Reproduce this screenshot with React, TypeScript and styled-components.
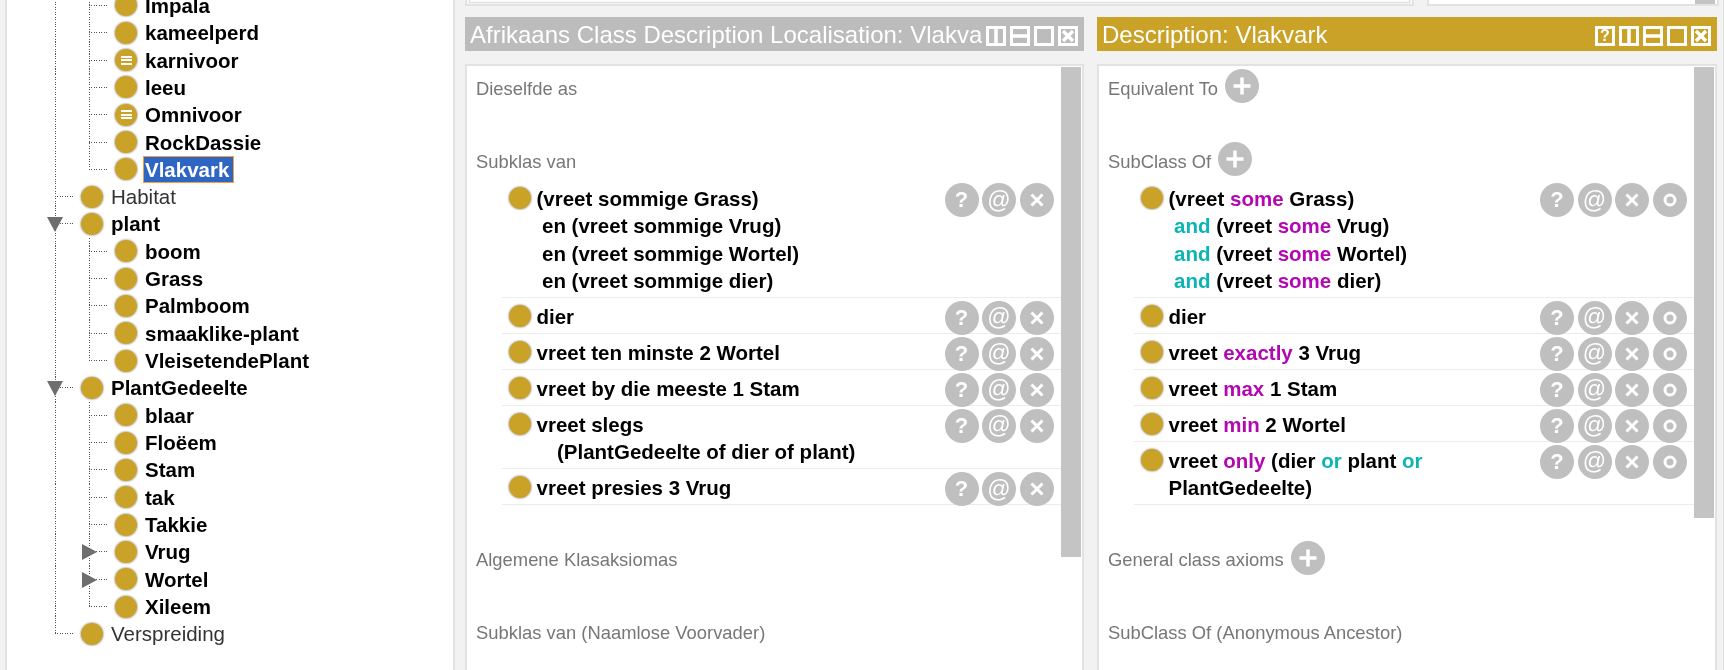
import React from "react";
import styled, { createGlobalStyle } from "styled-components";

const GOLD = "#c9a227";
const BUTTON_GREY = "#bfbfbf";

type TreeItem = {
  label: string;
  level: 1 | 2;
  strong?: boolean;
  defined?: boolean;
  selected?: boolean;
  open?: boolean;
  closed?: boolean;
  lastInGroup?: boolean;
  lastRoot?: boolean;
};

const treeItems: TreeItem[] = [
  { label: "Impala", level: 2, strong: true },
  { label: "kameelperd", level: 2, strong: true },
  { label: "karnivoor", level: 2, strong: true, defined: true },
  { label: "leeu", level: 2, strong: true },
  { label: "Omnivoor", level: 2, strong: true, defined: true },
  { label: "RockDassie", level: 2, strong: true },
  { label: "Vlakvark", level: 2, strong: true, selected: true, lastInGroup: true },
  { label: "Habitat", level: 1 },
  { label: "plant", level: 1, strong: true, open: true },
  { label: "boom", level: 2, strong: true },
  { label: "Grass", level: 2, strong: true },
  { label: "Palmboom", level: 2, strong: true },
  { label: "smaaklike-plant", level: 2, strong: true },
  { label: "VleisetendePlant", level: 2, strong: true, lastInGroup: true },
  { label: "PlantGedeelte", level: 1, strong: true, open: true },
  { label: "blaar", level: 2, strong: true },
  { label: "Floëem", level: 2, strong: true },
  { label: "Stam", level: 2, strong: true },
  { label: "tak", level: 2, strong: true },
  { label: "Takkie", level: 2, strong: true },
  { label: "Vrug", level: 2, strong: true, closed: true },
  { label: "Wortel", level: 2, strong: true, closed: true },
  { label: "Xileem", level: 2, strong: true, lastInGroup: true },
  { label: "Verspreiding", level: 1, lastRoot: true },
];

export default function App() {
  return (
    <>
      <GlobalStyle />
      <Screen>
        <TreePanel>
          <TreeList>
            {treeItems.map((item) => (
              <TreeRow key={item.label} item={item} />
            ))}
          </TreeList>
        </TreePanel>

        <Workspace>
          <TopStrip>
            <TopPaneWide>
              <TopPaneInner />
            </TopPaneWide>
            <TopPaneNarrow>
              <TopThumb />
            </TopPaneNarrow>
          </TopStrip>

          <Columns>
            <Column $width={619}>
              <ViewHeader $tone="#bcbcbc">
                <ViewTitle>Afrikaans Class Description Localisation: Vlakvark</ViewTitle>
                <HeaderIcons>
                  <SplitVerticalIcon />
                  <SplitHorizontalIcon />
                  <MaximiseIcon />
                  <CloseIcon />
                </HeaderIcons>
              </ViewHeader>
              <ViewBody>
                <ViewContent>
                  <SectionTitle>
                    <SectionLabel>Dieselfde as</SectionLabel>
                  </SectionTitle>
                  <SectionTitle>
                    <SectionLabel>Subklas van</SectionLabel>
                  </SectionTitle>
                  <AxiomList>
                    <Axiom>
                      <AxiomLine>(vreet sommige Grass)</AxiomLine>
                      <AxiomLine $indent={5.5}>en (vreet sommige Vrug)</AxiomLine>
                      <AxiomLine $indent={5.5}>en (vreet sommige Wortel)</AxiomLine>
                      <AxiomLine $indent={5.5}>en (vreet sommige dier)</AxiomLine>
                    </Axiom>
                    <Axiom>
                      <AxiomLine>dier</AxiomLine>
                    </Axiom>
                    <Axiom>
                      <AxiomLine>vreet ten minste 2 Wortel</AxiomLine>
                    </Axiom>
                    <Axiom>
                      <AxiomLine>vreet by die meeste 1 Stam</AxiomLine>
                    </Axiom>
                    <Axiom>
                      <AxiomLine>vreet slegs</AxiomLine>
                      <AxiomLine $indent={20.5}>(PlantGedeelte of dier of plant)</AxiomLine>
                    </Axiom>
                    <Axiom>
                      <AxiomLine>vreet presies 3 Vrug</AxiomLine>
                    </Axiom>
                  </AxiomList>
                  <SectionTitle>
                    <SectionLabel>Algemene Klasaksiomas</SectionLabel>
                  </SectionTitle>
                  <SectionTitle>
                    <SectionLabel>Subklas van (Naamlose Voorvader)</SectionLabel>
                  </SectionTitle>
                </ViewContent>
                <ScrollThumb $height={490} />
              </ViewBody>
            </Column>

            <Column $width={620}>
              <ViewHeader $tone={GOLD}>
                <ViewTitle>Description: Vlakvark</ViewTitle>
                <HeaderIcons>
                  <HelpIcon />
                  <SplitVerticalIcon />
                  <SplitHorizontalIcon />
                  <MaximiseIcon />
                  <CloseIcon />
                </HeaderIcons>
              </ViewHeader>
              <ViewBody>
                <ViewContent>
                  <SectionTitle>
                    <SectionLabel>Equivalent To</SectionLabel>
                    <AddButton />
                  </SectionTitle>
                  <SectionTitle>
                    <SectionLabel>SubClass Of</SectionLabel>
                    <AddButton />
                  </SectionTitle>
                  <AxiomList>
                    <Axiom $extra>
                      <AxiomLine>
                        (vreet <Keyword>some</Keyword> Grass)
                      </AxiomLine>
                      <AxiomLine $indent={5.5}>
                        <Connective>and</Connective> (vreet <Keyword>some</Keyword> Vrug)
                      </AxiomLine>
                      <AxiomLine $indent={5.5}>
                        <Connective>and</Connective> (vreet <Keyword>some</Keyword> Wortel)
                      </AxiomLine>
                      <AxiomLine $indent={5.5}>
                        <Connective>and</Connective> (vreet <Keyword>some</Keyword> dier)
                      </AxiomLine>
                    </Axiom>
                    <Axiom $extra>
                      <AxiomLine>dier</AxiomLine>
                    </Axiom>
                    <Axiom $extra>
                      <AxiomLine>
                        vreet <Keyword>exactly</Keyword> 3 Vrug
                      </AxiomLine>
                    </Axiom>
                    <Axiom $extra>
                      <AxiomLine>
                        vreet <Keyword>max</Keyword> 1 Stam
                      </AxiomLine>
                    </Axiom>
                    <Axiom $extra>
                      <AxiomLine>
                        vreet <Keyword>min</Keyword> 2 Wortel
                      </AxiomLine>
                    </Axiom>
                    <Axiom $extra>
                      <AxiomLine>
                        vreet <Keyword>only</Keyword> (dier <Connective>or</Connective> plant{" "}
                        <Connective>or</Connective>
                      </AxiomLine>
                      <AxiomLine>PlantGedeelte)</AxiomLine>
                    </Axiom>
                  </AxiomList>
                  <SectionTitle>
                    <SectionLabel>General class axioms</SectionLabel>
                    <AddButton />
                  </SectionTitle>
                  <SectionTitle>
                    <SectionLabel>SubClass Of (Anonymous Ancestor)</SectionLabel>
                  </SectionTitle>
                </ViewContent>
                <ScrollThumb $height={451} />
              </ViewBody>
            </Column>
          </Columns>
        </Workspace>

        <WindowEdge>
          <WindowEdgeMark />
        </WindowEdge>
      </Screen>
    </>
  );
}

function TreeRow({ item }: { item: TreeItem }) {
  const rootTrunk = item.lastRoot ? "half" : "full";

  return (
    <Row>
      {item.level === 1 ? (
        <Guide $width={26} $trunk={rootTrunk} $branch>
          {item.open && <OpenToggle />}
        </Guide>
      ) : (
        <>
          <Guide $width={34} $trunk="full" />
          <Guide $width={26} $trunk={item.lastInGroup ? "half" : "full"} $branch>
            {item.closed && <ClosedToggle />}
          </Guide>
        </>
      )}
      <Bullet>{item.defined && <DefinedMark />}</Bullet>
      <TreeLabel $strong={item.strong} $selected={item.selected}>
        {item.label}
      </TreeLabel>
    </Row>
  );
}

function Axiom({ children, $extra }: { children: React.ReactNode; $extra?: boolean }) {
  return (
    <AxiomRow>
      <AxiomBullet />
      <AxiomText>{children}</AxiomText>
      <AxiomButtons>
        <RoundButton>?</RoundButton>
        <RoundButton $light>@</RoundButton>
        <RoundButton>
          <svg width="18" height="18" viewBox="0 0 18 18">
            <path d="M3.5 3.5l11 11M14.5 3.5l-11 11" stroke="#fff" strokeWidth="3" />
          </svg>
        </RoundButton>
        {$extra && (
          <RoundButton>
            <svg width="18" height="18" viewBox="0 0 18 18">
              <circle cx="9" cy="9" r="5" fill="none" stroke="#fff" strokeWidth="3" />
            </svg>
          </RoundButton>
        )}
      </AxiomButtons>
    </AxiomRow>
  );
}

function AddButton() {
  return (
    <AddCircle>
      <svg width="22" height="22" viewBox="0 0 22 22">
        <path d="M11 2.5v17M2.5 11h17" stroke="#fff" strokeWidth="3.5" />
      </svg>
    </AddCircle>
  );
}

function HeaderIconFrame({ children }: { children?: React.ReactNode }) {
  return (
    <svg width="20" height="20" viewBox="0 0 20 20">
      <rect x="1.5" y="1.5" width="17" height="17" fill="none" stroke="#fff" strokeWidth="3" />
      {children}
    </svg>
  );
}

function HelpIcon() {
  return <HelpBox>?</HelpBox>;
}

function SplitVerticalIcon() {
  return (
    <HeaderIconFrame>
      <path d="M10 1v18" stroke="#fff" strokeWidth="3.5" />
    </HeaderIconFrame>
  );
}

function SplitHorizontalIcon() {
  return (
    <HeaderIconFrame>
      <path d="M1 10h18" stroke="#fff" strokeWidth="3.5" />
    </HeaderIconFrame>
  );
}

function MaximiseIcon() {
  return <HeaderIconFrame />;
}

function CloseIcon() {
  return (
    <HeaderIconFrame>
      <path d="M5 5l10 10M15 5L5 15" stroke="#fff" strokeWidth="3.5" />
    </HeaderIconFrame>
  );
}

const GlobalStyle = createGlobalStyle`
  html, body {
    margin: 0;
    padding: 0;
    background: #f2f2f2;
  }
`;

const Screen = styled("div")`
  width: 1724px;
  height: 670px;
  overflow: hidden;
  display: flex;
  padding-left: 5px;
  box-sizing: border-box;
  background: #f2f2f2;
  color: #000;
  font-family: "Liberation Sans", Arial, sans-serif;
  filter: blur(0.5px);
`;

const TreePanel = styled("div")`
  width: 450px;
  flex-shrink: 0;
  box-sizing: border-box;
  background: #fff;
  border-left: 2px solid #e2e2e2;
  border-right: 2px solid #e2e2e2;
  overflow: hidden;
`;

const TreeList = styled("div")`
  margin-top: -8.3px;
  padding-left: 48px;
`;

const Row = styled("div")`
  height: 27.33px;
  display: flex;
  align-items: center;
`;

type GuideProps = {
  $width: number;
  $trunk: "full" | "half";
  $branch?: boolean;
};
const Guide = styled("span")<GuideProps>`
  position: relative;
  flex-shrink: 0;
  align-self: stretch;
  width: ${({ $width }) => $width}px;
  background-image:
    repeating-linear-gradient(to bottom, #555 0 1px, transparent 1px 2.5px)
    ${({ $branch }) =>
      $branch ? ", repeating-linear-gradient(to right, #555 0 1px, transparent 1px 2.5px)" : ""};
  background-repeat: no-repeat;
  background-size: 1px ${({ $trunk }) => ($trunk === "half" ? "50%" : "100%")}
    ${({ $branch }) => ($branch ? ", 20px 1px" : "")};
  background-position: 0 0 ${({ $branch }) => ($branch ? ", 0 50%" : "")};
`;

const OpenToggle = styled("span")`
  position: absolute;
  left: -8px;
  top: 7px;
  width: 0;
  height: 0;
  border-left: 8.5px solid transparent;
  border-right: 8.5px solid transparent;
  border-top: 15px solid #6e6e6e;
`;

const ClosedToggle = styled("span")`
  position: absolute;
  left: -7px;
  top: 6px;
  width: 0;
  height: 0;
  border-top: 8px solid transparent;
  border-bottom: 8px solid transparent;
  border-left: 15px solid #6e6e6e;
`;

const Bullet = styled("span")`
  width: 22px;
  height: 22px;
  flex-shrink: 0;
  border-radius: 50%;
  background: ${GOLD};
  box-shadow: 0 0 1.5px 1px rgba(150, 150, 150, 0.55);
  display: flex;
  align-items: center;
  justify-content: center;
`;

const DefinedMark = styled("span")`
  width: 11px;
  height: 9px;
  background: repeating-linear-gradient(to bottom, #fff 0 2px, transparent 2px 3.5px);
`;

type TreeLabelProps = {
  $strong?: boolean;
  $selected?: boolean;
};
const TreeLabel = styled("span")<TreeLabelProps>`
  margin-left: 6px;
  padding: 0 ${({ $selected }) => ($selected ? "4px" : "2px")} 0 1px;
  height: 25px;
  line-height: 25px;
  border: 1px solid ${({ $selected }) => ($selected ? "#f0a040" : "transparent")};
  background: ${({ $selected }) => ($selected ? "#2f66c4" : "transparent")};
  color: ${({ $selected, $strong }) => ($selected ? "#fff" : $strong ? "#000" : "#333")};
  font-size: 20.5px;
  font-weight: ${({ $strong }) => ($strong ? 700 : 400)};
  white-space: nowrap;
`;

const Workspace = styled("div")`
  margin-left: 10px;
  width: 1255px;
  flex-shrink: 0;
  display: flex;
  flex-direction: column;
`;

const TopStrip = styled("div")`
  height: 7px;
  display: flex;
  justify-content: space-between;
  margin-bottom: 11px;
`;

const TopPaneWide = styled("div")`
  width: 949px;
  box-sizing: border-box;
  border: 2px solid #e2e2e2;
  border-top: none;
  padding: 0 2px 1px;
  background: #f7f7f7;
`;

const TopPaneInner = styled("div")`
  height: 100%;
  box-sizing: border-box;
  border: 1px solid #dcdcdc;
  border-top: none;
  background: #fbfbfb;
`;

const TopPaneNarrow = styled("div")`
  width: 292px;
  margin-right: 1px;
  box-sizing: border-box;
  border: 2px solid #e2e2e2;
  border-top: none;
  background: #fff;
  display: flex;
  justify-content: flex-end;
  padding-right: 2px;
`;

const TopThumb = styled("div")`
  width: 20px;
  height: 4px;
  background: #c4c4c4;
`;

const Columns = styled("div")`
  display: flex;
  gap: 13px;
`;

const Column = styled("div")<{ $width: number }>`
  width: ${({ $width }) => $width}px;
  flex-shrink: 0;
  display: flex;
  flex-direction: column;
  row-gap: 13px;
`;

const ViewHeader = styled("div")<{ $tone: string }>`
  height: 34px;
  display: flex;
  align-items: center;
  padding: 0 6px 0 5px;
  background: ${({ $tone }) => $tone};
`;

const ViewTitle = styled("div")`
  flex: 1;
  min-width: 0;
  overflow: hidden;
  white-space: nowrap;
  color: #fff;
  font-size: 24px;
  line-height: 34px;
  padding-top: 2px;
`;

const HeaderIcons = styled("div")`
  display: flex;
  gap: 4px;
  margin-left: 4px;
  margin-top: 4px;
`;

const HelpBox = styled("span")`
  width: 20px;
  height: 20px;
  box-sizing: border-box;
  border: 3px solid #fff;
  color: #fff;
  font-size: 16px;
  font-weight: 700;
  line-height: 14px;
  text-align: center;
`;

const ViewBody = styled("div")`
  height: 620px;
  display: flex;
  box-sizing: border-box;
  background: #fff;
  border: 2px solid #e2e2e2;
  padding-top: 1px;
  padding-right: 1px;
`;

const ViewContent = styled("div")`
  flex: 1;
  min-width: 0;
  padding-top: 3px;
`;

const ScrollThumb = styled("div")<{ $height: number }>`
  width: 20px;
  height: ${({ $height }) => $height}px;
  flex-shrink: 0;
  background: #c4c4c4;
`;

const SectionTitle = styled("div")`
  height: 36px;
  display: flex;
  align-items: center;
  column-gap: 7px;
  padding-left: 9px;
  margin-bottom: 37px;
`;

const SectionLabel = styled("span")`
  font-size: 18.4px;
  color: #777;
  white-space: nowrap;
  padding-top: 1px;
`;

const AddCircle = styled("span")`
  width: 34px;
  height: 34px;
  margin-top: -4px;
  border-radius: 50%;
  background: ${BUTTON_GREY};
  display: flex;
  align-items: center;
  justify-content: center;
`;

const AxiomList = styled("div")`
  margin-top: -37px;
  margin-left: 35px;
  margin-bottom: 36.5px;
  padding-top: 1px;
`;

const AxiomRow = styled("div")`
  display: flex;
  align-items: flex-start;
  box-sizing: border-box;
  padding: 3px 7.5px 2.67px 7px;
  border-bottom: 1px solid #ececec;
`;

const AxiomBullet = styled(Bullet)`
  margin-top: 4px;
`;

const AxiomText = styled("div")`
  flex: 1;
  min-width: 0;
  margin-left: 5.5px;
  padding-top: 2px;
`;

const AxiomLine = styled("div")<{ $indent?: number }>`
  height: 27.33px;
  line-height: 27.33px;
  padding-left: ${({ $indent }) => $indent ?? 0}px;
  font-size: 20.5px;
  font-weight: 700;
  white-space: nowrap;
`;

const Keyword = styled("span")`
  color: #b208b2;
`;

const Connective = styled("span")`
  color: #0cb4b4;
`;

const AxiomButtons = styled("div")`
  display: flex;
  column-gap: 3.5px;
  margin-bottom: -6px;
`;

const RoundButton = styled("span")<{ $light?: boolean }>`
  width: 34px;
  height: 34px;
  border-radius: 50%;
  background: ${BUTTON_GREY};
  color: #fff;
  font-size: ${({ $light }) => ($light ? 23 : 22)}px;
  font-weight: ${({ $light }) => ($light ? 400 : 700)};
  display: flex;
  align-items: center;
  justify-content: center;
`;

const WindowEdge = styled("div")`
  margin-left: 3px;
  width: 2px;
  border-left: 2px solid #dcdcdc;
  background: #5a90d4;
  flex-shrink: 0;
`;

const WindowEdgeMark = styled("div")`
  margin-top: 141px;
  height: 17px;
  background: #2b66b8;
`;
